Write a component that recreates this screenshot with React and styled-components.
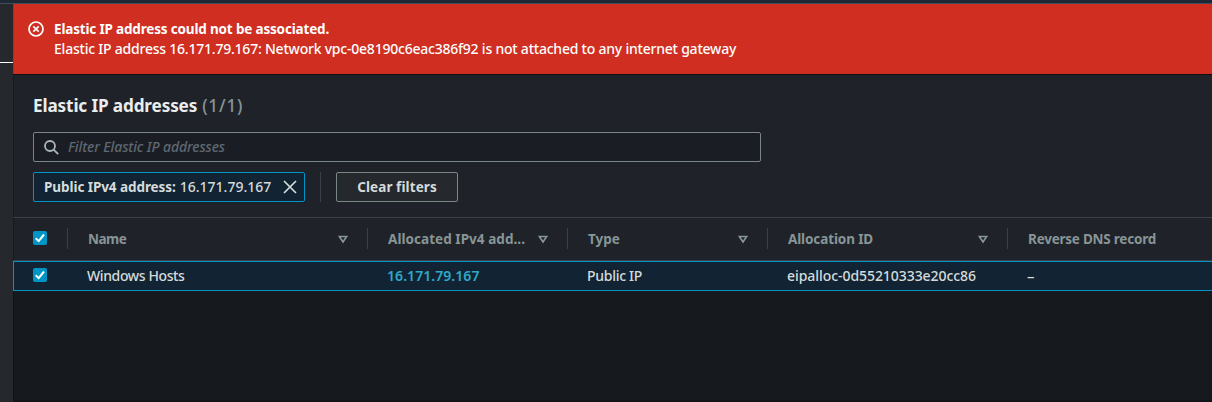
import React from "react";
import styled, { createGlobalStyle } from "styled-components";

const GlobalStyle = createGlobalStyle`
  *, *::before, *::after { box-sizing: border-box; }
  body {
    margin: 0;
    background: #16191d;
    color: #d5dbdb;
    font-family: "Noto Sans", "Open Sans", sans-serif;
    font-size: 14px;
    line-height: 20px;
    overflow: hidden;
  }
`;

const Page = styled.div`
  display: flex;
  flex-direction: column;
  height: 402px;
`;

const TopBar = styled.header`
  flex: none;
  height: 4px;
  background: #1f2835;
  border-bottom: 1px solid #414d5c;
`;

const Body = styled.div`
  display: flex;
  flex: 1;
  min-height: 0;
`;

const Rail = styled.aside`
  flex: none;
  width: 13px;
  padding-top: 58px;
  background: #25282c;
`;

const RailRule = styled.div`
  height: 1px;
  background: #fff;
`;

const Main = styled.main`
  flex: 1;
  min-width: 0;
  display: flex;
  flex-direction: column;
  background: #16191d;
  border-bottom: 2px solid #131519;
  box-shadow: inset 1px 0 0 rgba(0, 0, 0, 0.25);
`;

const Text = styled.span`
  white-space: pre;
  font-size: ${(p) => p.$size || (p.$bold ? 13.5 : 14)}px;
  font-weight: ${(p) => (p.$bold ? 700 : p.$weight || 500)};
  font-style: ${(p) => (p.$italic ? "italic" : "normal")};
  letter-spacing: ${(p) => p.$track || 0}px;
`;

const Alert = styled.section`
  flex: none;
  display: flex;
  gap: 10px;
  height: 70px;
  padding: 15px 15px 0;
  background: #d02e20;
  color: #fff;
  box-shadow: inset 1px 0 0 rgba(0, 0, 0, 0.12);
`;

const AlertIcon = styled.svg`
  flex: none;
  width: 16px;
  height: 16px;
  margin-top: 2px;
`;

const AlertText = styled.div`
  display: flex;
  flex-direction: column;
`;

const Panel = styled.section`
  flex: none;
  border-top: 1px solid #0d1013;
  background: #1f2229;
  box-shadow: inset 1px 0 0 rgba(0, 0, 0, 0.25);
`;

const Toolbar = styled.div`
  display: flex;
  flex-direction: column;
  height: 142px;
  padding: 20px 20px 0;
`;

const Heading = styled.h1`
  margin: 0 0 15px;
  display: flex;
  align-items: baseline;
  gap: 5px;
  height: 22px;
  line-height: 22px;
  color: #eaeded;
`;

const Count = styled(Text)`
  color: #879596;
`;

const Search = styled.div`
  display: flex;
  align-items: center;
  gap: 9px;
  width: 728px;
  height: 30px;
  padding: 0 10px;
  border: 1px solid #7a8785;
  border-radius: 2px;
  background: #1a1e24;
  color: #5f6872;
`;

const Filters = styled.div`
  display: flex;
  gap: 15px;
  height: 30px;
  margin-top: 10px;
`;

const Token = styled.div`
  display: flex;
  align-items: center;
  width: 272px;
  padding: 0 7px 0 10px;
  gap: 4px;
  border: 1px solid #0095c4;
  border-radius: 2px;
  background: #122433;
`;

const TokenClose = styled.button`
  display: flex;
  margin: 0 0 0 auto;
  padding: 0;
  border: 0;
  background: none;
`;

const Divider = styled.div`
  width: 1px;
  background: #3b3f48;
`;

const Button = styled.button`
  width: 122px;
  padding: 0;
  border: 1px solid #7a8785;
  border-radius: 2px;
  background: #25282c;
  color: #d5dbdb;
  font: inherit;
`;

const HeaderRow = styled.div`
  display: grid;
  grid-template-columns: 55px 300px 200px 200px 240px 1fr;
  height: 44px;
  border-top: 1px solid #3b3f48;
  border-bottom: 1px solid #3b3f48;
  padding: 10px 0 0;
  color: #879596;
`;

const HeaderCell = styled.div`
  display: flex;
  align-items: center;
  justify-content: space-between;
  height: 21px;
  padding: 0 ${(p) => (p.$check ? 0 : 19)}px 0 20px;
  border-right: ${(p) => (p.$last ? 0 : "1px solid #3b3f48")};
`;

const Row = styled.div`
  flex: none;
  display: grid;
  grid-template-columns: 54px 300px 200px 200px 240px 1fr;
  height: 30px;
  border: 1px solid #0095c4;
  border-right: 0;
  background: #122433;
`;

const Cell = styled.div`
  display: flex;
  align-items: center;
  padding-left: 19px;
`;

const IpLink = styled.a`
  color: #2ea9cb;
`;

const CheckMark = styled.svg`
  display: block;
  width: 14px;
  height: 14px;
  margin-top: -2px;
`;

const SortMark = styled.svg`
  display: block;
  width: 10px;
  height: 9px;
  margin-top: 1px;
`;

const Checkbox = () => (
  <CheckMark viewBox="0 0 14 14" fill="none">
    <rect width="14" height="14" rx="2" fill="#0095c4" />
    <path d="M2.7 7.2 5.7 10.1 11 3.5" stroke="#fff" strokeWidth="2" />
  </CheckMark>
);

const SortIcon = () => (
  <SortMark viewBox="0 0 10 9" fill="none">
    <path d="M1.3 1.5H8.7L5 7Z" stroke="#879596" strokeWidth="1.7" />
  </SortMark>
);

const headers = [
  { label: "Name", track: -0.5 },
  { label: "Allocated IPv4 add...", track: 0.05 },
  { label: "Type", track: 0 },
  { label: "Allocation ID", track: -0.12 },
  { label: "Reverse DNS record", track: -0.23, last: true },
];

export default function App() {
  return (
    <>
      <GlobalStyle />
      <Page>
        <TopBar />
        <Body>
          <Rail>
            <RailRule />
          </Rail>
          <Main>
            <Alert>
              <AlertIcon viewBox="0 0 16 16" fill="none" stroke="#fff">
                <circle cx="8" cy="8" r="7" strokeWidth="1.7" />
                <path d="M5.3 5.3 10.7 10.7M10.7 5.3 5.3 10.7" strokeWidth="1.7" />
              </AlertIcon>
              <AlertText>
                <Text $bold $track={-0.17}>Elastic IP address could not be associated.</Text>
                <Text $track={-0.22}>
                  Elastic IP address 16.171.79.167: Network vpc-0e8190c6eac386f92 is not attached to any internet gateway
                </Text>
              </AlertText>
            </Alert>
            <Panel>
              <Toolbar>
                <Heading>
                  <Text $bold $size={17.2} $track={-0.15}>Elastic IP addresses</Text>
                  <Count $size={17.2} $track={0.8}>(1/1)</Count>
                </Heading>
                <Search>
                  <svg width="15" height="15" viewBox="0 0 15 15" fill="none" stroke="#aab7b8" strokeWidth="1.8">
                    <circle cx="6" cy="6" r="5" />
                    <path d="M9.6 9.6 14.2 14.2" />
                  </svg>
                  <Text $italic $track={-0.1}>Filter Elastic IP addresses</Text>
                </Search>
                <Filters>
                  <Token>
                    <Text $bold $track={-0.07}>Public IPv4 address:</Text>
                    <Text $track={0}>16.171.79.167</Text>
                    <TokenClose aria-label="Remove filter">
                      <svg width="14" height="14" viewBox="0 0 14 14" fill="none" stroke="#d5dbdb" strokeWidth="1.7">
                        <path d="M1 1 13 13M13 1 1 13" />
                      </svg>
                    </TokenClose>
                  </Token>
                  <Divider />
                  <Button>
                    <Text $bold $track={0.1}>Clear filters</Text>
                  </Button>
                </Filters>
              </Toolbar>
              <HeaderRow>
                <HeaderCell $check>
                  <Checkbox />
                </HeaderCell>
                {headers.map((h) => (
                  <HeaderCell key={h.label} $last={h.last}>
                    <Text $bold $track={h.track}>{h.label}</Text>
                    {!h.last && <SortIcon />}
                  </HeaderCell>
                ))}
              </HeaderRow>
            </Panel>
            <Row>
              <Cell>
                <Checkbox />
              </Cell>
              <Cell>
                <Text $track={-0.38}>Windows Hosts</Text>
              </Cell>
              <Cell>
                <IpLink>
                  <Text $weight={600} $track={0.06}>16.171.79.167</Text>
                </IpLink>
              </Cell>
              <Cell>
                <Text $track={-0.28}>Public IP</Text>
              </Cell>
              <Cell>
                <Text $track={-0.06}>eipalloc-0d55210333e20cc86</Text>
              </Cell>
              <Cell>
                <Text $size={15}>–</Text>
              </Cell>
            </Row>
          </Main>
        </Body>
      </Page>
    </>
  );
}
